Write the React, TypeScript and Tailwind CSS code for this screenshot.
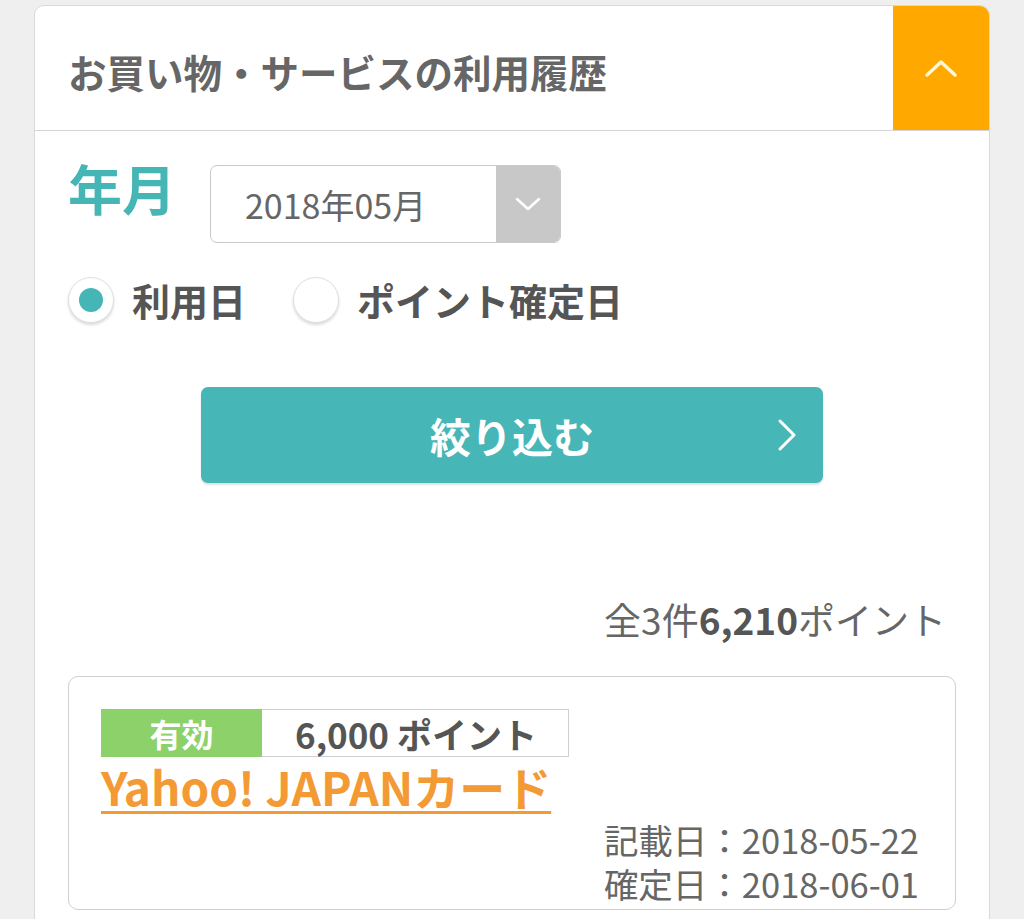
const jp = { fontFamily: '"Noto Sans CJK JP", "Noto Sans", sans-serif' }

function ChevronUp() {
  return (
    <svg width="34" height="20" viewBox="0 0 34 20" fill="none">
      <path d="M3 17 L17 4 L31 17" stroke="#fff7d6" strokeWidth="3.5" strokeLinecap="round" strokeLinejoin="round" />
    </svg>
  )
}

function ChevronDown() {
  return (
    <svg width="26" height="14" viewBox="0 0 26 14" fill="none">
      <path d="M2 2 L13 12 L24 2" stroke="#ffffff" strokeWidth="2.5" strokeLinecap="round" strokeLinejoin="round" />
    </svg>
  )
}

function ChevronRight() {
  return (
    <svg width="20" height="34" viewBox="0 0 20 34" fill="none">
      <path d="M3 3 L17 17 L3 31" stroke="#ffffff" strokeWidth="3" strokeLinecap="round" strokeLinejoin="round" />
    </svg>
  )
}

function Radio({ checked, label }: { checked?: boolean; label: string }) {
  return (
    <label className="flex items-center gap-[18px]">
      <span className="w-[46px] h-[46px] rounded-full bg-white border border-[#e0e0e0] shadow-[0_2px_3px_rgba(0,0,0,0.15)] flex items-center justify-center">
        {checked && <span className="w-[24px] h-[24px] rounded-full bg-[#45b5b5]" />}
      </span>
      <span className="text-[38px] font-bold text-[#555] leading-none">{label}</span>
    </label>
  )
}

export default function App() {
  return (
    <div className="min-h-screen bg-[#efefef] px-[34px] pt-[5px]" style={jp}>
      <div className="bg-white border border-[#d9d9d9] rounded-t-[10px] overflow-hidden">
        {/* Header */}
        <div className="flex h-[125px] border-b border-[#d5d5d5]">
          <div className="flex-1 flex items-center pl-[33px] pt-[6px]">
            <h2 className="text-[38.5px] font-bold text-[#666] leading-none">
              お買い物・サービスの利用履歴
            </h2>
          </div>
          <button className="w-[96px] bg-[#ffa800] flex items-center justify-center">
            <ChevronUp />
          </button>
        </div>

        {/* Body */}
        <div className="px-[33px] pb-[20px]">
          <div className="flex items-start gap-[34px] pt-[28px]">
            <span className="text-[54px] font-bold text-[#45b5b5] leading-none pt-[2px]">年月</span>
            <div className="flex w-[351px] h-[78px] mt-[6px] border border-[#c9c9c9] rounded-[7px] overflow-hidden">
              <div className="flex-1 flex items-center pl-[34px] text-[34px] text-[#666]">2018年05月</div>
              <div className="w-[64px] bg-[#c8c8c8] flex items-center justify-center">
                <ChevronDown />
              </div>
            </div>
          </div>

          <div className="flex items-center gap-[47px] mt-[34px]">
            <Radio checked label="利用日" />
            <Radio label="ポイント確定日" />
          </div>

          <div className="flex justify-center mt-[64px]">
            <button className="relative w-[622px] h-[96px] bg-[#46b6b6] rounded-[7px] shadow-[0_2px_2px_rgba(0,0,0,0.12)] flex items-center justify-center">
              <span className="text-[41px] font-bold text-white leading-none">絞り込む</span>
              <span className="absolute right-[26px] top-1/2 -translate-y-1/2">
                <ChevronRight />
              </span>
            </button>
          </div>

          <div className="flex justify-end pr-[10px] mt-[118px] text-[37px] text-[#666] leading-none">
            <span>全3件</span>
            <span className="font-bold text-[#555]">6,210</span>
            <span>ポイント</span>
          </div>

          <div className="mt-[38px] border border-[#d0d0d0] rounded-[10px] px-[32px] pt-[32px] pb-[4px]">
            <div className="flex h-[48px] w-[468px]">
              <div className="w-[161px] bg-[#8dd16b] flex items-center justify-center text-[32px] font-bold text-white leading-none">
                有効
              </div>
              <div className="flex-1 border border-l-0 border-[#cfcfcf] flex items-center pl-[33px] text-[35px] font-bold text-[#555] leading-none">
                6,000 ポイント
              </div>
            </div>
            <a className="inline-block mt-[6px] text-[46px] font-bold text-[#f39a35] underline decoration-[3px] underline-offset-[5px] leading-[46px]">
              Yahoo! JAPANカード
            </a>
            <div className="flex flex-col items-end pr-[4px] mt-[6px] text-[34.5px] text-[#666] leading-[44px]">
              <span>記載日：2018-05-22</span>
              <span>確定日：2018-06-01</span>
            </div>
          </div>
        </div>
      </div>
    </div>
  )
}
